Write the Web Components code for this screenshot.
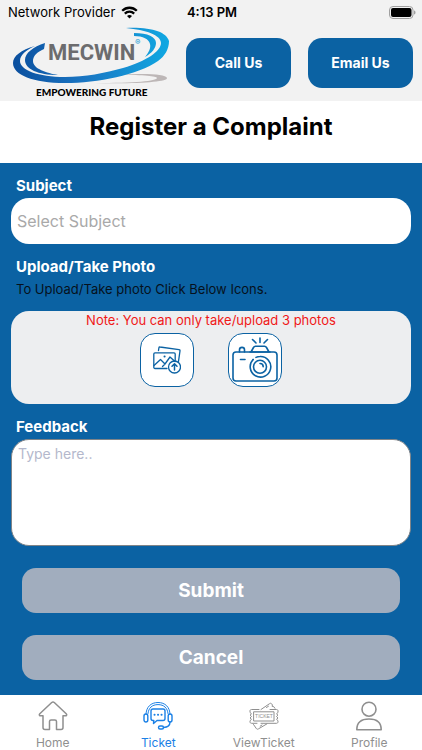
<!DOCTYPE html>
<html lang="en">
<head>
<meta charset="utf-8">
<meta name="viewport" content="width=device-width, initial-scale=1">
<title>Register a Complaint</title>
<style>
  :root {
    --brand: #0b62a3;
    --chrome: #f2f2f2;
    --active: #1a80e6;
    --idle: #8f8f8f;
  }
  body {
    margin: 0;
    font-family: Inter, "Liberation Sans", sans-serif;
    font-size: 15px;
    line-height: 20px;
    color: #000;
  }
</style>
</head>
<body>
<complaint-screen></complaint-screen>

<script>
'use strict'

class Base extends HTMLElement {
  constructor () {
    super()
    this.attachShadow({ mode: 'open' }).innerHTML = `
      <style>
        :host { display: block; box-sizing: border-box; }
        *, *::before, *::after { box-sizing: border-box; }
        svg { display: block; }
        button, select, textarea { font: inherit; margin: 0; }
      </style>
      ${this.render()}
    `
  }

  render () { return '<slot></slot>' }
}

customElements.define('status-bar', class extends Base {
  render () {
    return `
      <style>
        :host {
          display: grid;
          grid-template-columns: 1fr auto 1fr;
          align-items: center;
          height: 24px;
          padding: 0 6px 0 8px;
          font-size: 13px;
        }
        .carrier { display: flex; align-items: center; gap: 6px; white-space: nowrap; }
        .time { font-weight: 600; }
        .battery { justify-self: end; }
      </style>
      <div class="carrier">
        <span>Network Provider</span>
        <svg width="17" height="13" viewBox="0 0 17 13" fill="none" stroke="#000" stroke-width="2.3">
          <path d="M1.2 4.8C5.4 .7 11.6 .7 15.8 4.8M3.8 7.6c2.7-2.6 6.7-2.6 9.4 0"/>
          <path d="M8.5 12.6L6 9.9c1.5-1.3 3.5-1.3 5 0z" fill="#000" stroke="none"/>
        </svg>
      </div>
      <span class="time">4:13 PM</span>
      <svg class="battery" width="27" height="13" viewBox="0 0 27 13">
        <rect x=".5" y=".5" width="23.5" height="12" rx="3.5" fill="none" stroke="#a0a0a0"/>
        <rect x="2" y="2" width="20.5" height="9" rx="2" fill="#000"/>
        <path d="M25 4.5c2 .6 2 3.4 0 4z" fill="#a0a0a0"/>
      </svg>
    `
  }
})

customElements.define('brand-logo', class extends Base {
  render () {
    return `
      <svg width="156" height="72" viewBox="0 0 156 72" role="img" aria-label="Mecwin">
        <defs>
          <linearGradient id="swoosh" gradientUnits="userSpaceOnUse" x1="0" y1="0" x2="156" y2="0">
            <stop offset="0" stop-color="#0b4f9e"/>
            <stop offset=".45" stop-color="#1a75c2"/>
            <stop offset="1" stop-color="#10a8e2"/>
          </linearGradient>
        </defs>
        <path d="M108 48c22-2 45-1 46 3 1 4-30 6-72 5 40 0 62-2 62-5 0-2-14-3-36-3z" fill="#bdb7b7"/>
        <g fill="url(#swoosh)">
          <path d="M22 19C8 23 0 29 0 36c0 12 20 20 52 20 33 0 73-8 93-22 7-5 11-12 11-20C153 5 139 0 113 1c20 2 35 7 35 15 0 8-14 18-38 25-18 5-38 9-58 9C25 50 7 43 7 34c0-6 6-11 15-15z"/>
          <path d="M32 16C20 20 12 26 12 33c0 9 13 15 33 15-11-2-25-6-25-14 0-5 4-9 11-12z"/>
          <path d="M121 6c14 0 22 4 22 10 0 5-4 10-11 14 4-5 6-9 5-13-1-5-7-8-16-8z"/>
        </g>
        <text x="35" y="33" font-family="Roboto, sans-serif" font-size="22" font-weight="700" fill="#6c6c6e">MECWIN</text>
        <text x="122" y="18" font-size="8" fill="#1699d3">®</text>
        <text x="23" y="69" font-family="Lato, sans-serif" font-size="10" font-weight="900">EMPOWERING FUTURE</text>
      </svg>
    `
  }
})

customElements.define('contact-button', class extends Base {
  render () {
    return `
      <style>
        button {
          width: 100%;
          height: 50px;
          padding: 0;
          border: 0;
          border-radius: 14px;
          background: var(--brand);
          color: #fff;
          font-size: 14px;
          font-weight: 700;
        }
      </style>
      <button type="button"><slot></slot></button>
    `
  }
})

customElements.define('app-header', class extends Base {
  render () {
    return `
      <style>
        :host { background: var(--chrome); }
        .row {
          display: flex;
          align-items: center;
          gap: 17px;
          height: 77px;
          padding: 0 9px 0 13px;
        }
        contact-button { flex: 1; }
      </style>
      <status-bar></status-bar>
      <div class="row">
        <brand-logo></brand-logo>
        <contact-button>Call Us</contact-button>
        <contact-button>Email Us</contact-button>
      </div>
    `
  }
})

customElements.define('subject-field', class extends Base {
  render () {
    return `
      <style>
        label { display: block; padding: 0 5px; margin-bottom: 2px; color: #fff; font-weight: 700; }
        select {
          appearance: none;
          display: block;
          width: 100%;
          height: 46px;
          padding: 0 6px;
          border: 0;
          border-radius: 18px;
          background: #fff;
          color: #a9a9a9;
          font-size: 16px;
        }
      </style>
      <label for="subject">Subject</label>
      <select id="subject"><option>Select Subject</option></select>
    `
  }
})

customElements.define('feedback-field', class extends Base {
  render () {
    return `
      <style>
        label { display: block; padding: 0 5px; margin-bottom: 2px; color: #fff; font-weight: 700; }
        textarea {
          display: block;
          width: 100%;
          height: 107px;
          padding: 4px 6px;
          border: 1px solid #808488;
          border-radius: 18px;
          background: #fff;
          font-size: 14px;
          resize: none;
        }
        textarea::placeholder { color: #b4b8cc; opacity: 1; }
      </style>
      <label for="feedback">Feedback</label>
      <textarea id="feedback" placeholder="Type here.."></textarea>
    `
  }
})

customElements.define('photo-picker', class extends Base {
  render () {
    return `
      <style>
        h2 { margin: 0 5px 2px; color: #fff; font-size: 15px; line-height: 20px; font-weight: 700; }
        .hint { margin: 0 5px 12px; font-size: 13px; color: #06111c; }
        .panel {
          height: 93px;
          border-radius: 18px;
          background: #edeef0;
          text-align: center;
        }
        .note { margin: 0; color: #f01818; font-size: 13px; line-height: 18px; }
        .tiles { display: flex; justify-content: center; gap: 34px; padding-top: 4px; }
        button {
          display: grid;
          place-items: center;
          width: 54px;
          height: 54px;
          padding: 0;
          border: 1px solid var(--brand);
          border-radius: 15px;
          background: #fff;
        }
        svg { fill: none; stroke: var(--brand); stroke-linecap: round; stroke-linejoin: round; }
      </style>
      <h2>Upload/Take Photo</h2>
      <p class="hint">To Upload/Take photo Click Below Icons.</p>
      <div class="panel">
        <p class="note">Note: You can only take/upload 3 photos</p>
        <div class="tiles">
          <button type="button" aria-label="Upload photo">
            <svg width="28" height="28" viewBox="0 0 28 28" stroke-width="1.3">
              <path d="M5.5 4.5l.4-2.7c.1-.6.5-.9 1.1-.8L26 3.6c.8.1 1.1.6 1 1.2l-1.5 10.5M14 22.500H2c-.8 0-1.200-.5-1.200-1.200V8c0-.7.5-1.200 1.200-1.200h19c.7 0 1.200.5 1.200 1.200v6.500"/>
              <path d="M1 19.500l6.500-6 4.500 4.500 5-7 5 4.500M9.500 20.500l2.500-2.500"/>
              <path d="M11.500 10.500h.1" stroke-width="2"/>
              <circle cx="21.500" cy="21" r="6"/>
              <path d="M21.500 24v-6M19 20.200l2.500-2.500 2.500 2.500" stroke-width="1.500"/>
            </svg>
          </button>
          <button type="button" aria-label="Take photo">
            <svg width="46" height="46" viewBox="0 0 46 46" stroke-width="1.6">
              <rect x="1" y="15" width="44" height="29" rx="3"/>
              <path d="M7.500 15v-2.200c0-3.200 5-3.200 5 0V15M19 15l2.500-4.500c.5-.9 1-1.200 2-1.200h9c1 0 1.500.3 2 1.200L37 15M18 15h20"/>
              <path d="M28 1v4.500M20.500 2.500l3.500 3.500M35.500 2.500L32 6"/>
              <path d="M8.500 22.500h4.500M21 22.500h.1"/>
              <path d="M21.200 22.500A10.300 10.300 0 1 0 28 19.500c-1.700 0-2.800.3-4 .9"/>
              <circle cx="28" cy="29.800" r="6.500"/>
              <path d="M28 26.500c2 0 3.200 1.300 3.200 3.200"/>
            </svg>
          </button>
        </div>
      </div>
    `
  }
})

customElements.define('action-button', class extends Base {
  render () {
    return `
      <style>
        button {
          display: block;
          width: 100%;
          height: 45px;
          padding: 0;
          border: 0;
          border-radius: 14px;
          background: #a1adbe;
          color: #fff;
          font-size: 19px;
          font-weight: 700;
        }
      </style>
      <button type="button"><slot></slot></button>
    `
  }
})

customElements.define('tab-item', class extends Base {
  render () {
    return `
      <style>
        :host { flex: 1; color: var(--idle); }
        :host([active]) { color: var(--active); }
        a {
          display: flex;
          flex-direction: column;
          align-items: center;
          gap: 4px;
          color: inherit;
          font-size: 12px;
          line-height: 16px;
          text-decoration: none;
        }
        ::slotted(svg) {
          display: block;
          width: 30px;
          height: 30px;
          fill: none;
          stroke: currentColor;
          stroke-linecap: round;
          stroke-linejoin: round;
        }
      </style>
      <a href="#"><slot name="icon"></slot><slot></slot></a>
    `
  }
})

customElements.define('tab-bar', class extends Base {
  render () {
    return `
      <style>
        :host { display: flex; height: 55px; padding-top: 6px; background: #fff; }
      </style>
      <tab-item>
        <svg slot="icon" viewBox="0 0 30 30" stroke-width="1.5">
          <path d="M5 14.800v11.700c0 1.200.8 2 2 2h4.500V20.500c0-1 .6-1.600 1.600-1.600h3.800c1 0 1.600.6 1.600 1.600v8H23c1.200 0 2-.8 2-2V14.800h2.200c1.500 0 1.900-1.200 1-2.100L16.300 1.500c-.8-.7-1.800-.7-2.600 0L1.800 12.700c-.9.9-.5 2.100 1 2.100z"/>
        </svg>
        Home
      </tab-item>
      <tab-item active>
        <svg slot="icon" viewBox="0 0 30 30" stroke-width="1.4">
          <path d="M3 13.500C3 6 8 1.500 15 1.500S27 6 27 13.500M5 12.500C5.500 7 9 3.600 15 3.600S24.500 7 25 12.500" stroke-width="1"/>
          <rect x="1" y="13" width="3.800" height="8" rx="1.900"/>
          <rect x="25.200" y="13" width="3.800" height="8" rx="1.900"/>
          <path d="M27 21c0 3.500-2 5.200-6.500 5.500"/>
          <rect x="15.500" y="25" width="5" height="3" rx="1.500"/>
          <path d="M10 8h10c1.200 0 2 .8 2 2v7.500c0 1.200-.8 2-2 2h-6L10.500 22.500l.3-3H10c-1.200 0-2-.8-2-2V10c0-1.200.8-2 2-2z"/>
          <path d="M11.500 13.700h.1M15 13.700h.1M18.500 13.700h.1" stroke-width="2"/>
        </svg>
        Ticket
      </tab-item>
      <tab-item>
        <svg slot="icon" viewBox="0 0 30 30" stroke-width="1">
          <path d="M10 8.500H2.500c-.9 0-1.500.5-1.500 1.400v1.600l1.500 1.300L1 14.200l1.500 1.300L1 17l1.500 1.300L1 19.700v1.100c0 .9.600 1.500 1.500 1.500H8M21 8.500h6.500c.9 0 1.500.5 1.500 1.400v1.600l-1.500 1.300 1.500 1.400-1.500 1.300L29 17l-1.500 1.300 1.500 1.400v1.100c0 .9-.6 1.500-1.500 1.500H12"/>
          <path d="M12 8.500L20.500 2.700c.8-.6 1.500-.6 2 0l.9 1.200-.2 1.500 1.500.2 1.200 1.700M17.500 6.500l2-1.300M4.500 23.500l2.800 4c.5.800 1.300.9 2.100.4l8.500-5M13 24l-1.800 1.200"/>
          <path d="M5 10.800h20v9.200H5z"/>
          <text x="15" y="17.400" text-anchor="middle" font-family="Liberation Sans, sans-serif" font-size="5" fill="currentColor" stroke="none">TICKET</text>
        </svg>
        ViewTicket
      </tab-item>
      <tab-item>
        <svg slot="icon" viewBox="0 0 30 30" stroke-width="1.6">
          <circle cx="15" cy="8.200" r="7"/>
          <path d="M2.800 28.700C2.800 21.500 7 18 15 18s12.200 3.500 12.200 10.700z"/>
        </svg>
        Profile
      </tab-item>
    `
  }
})

customElements.define('complaint-screen', class extends Base {
  render () {
    return `
      <style>
        :host { display: flex; flex-direction: column; min-height: 100vh; }
        h1 {
          margin: 0;
          padding: 10px 0 20px;
          background: #fff;
          font-size: 24px;
          line-height: 32px;
          font-weight: 700;
          text-align: center;
        }
        form {
          flex: 1;
          display: flex;
          flex-direction: column;
          gap: 13px;
          padding: 13px 11px 15px;
          background: var(--brand);
        }
        .actions {
          display: flex;
          flex-direction: column;
          gap: 22px;
          padding: 9px 11px 0;
        }
      </style>
      <app-header></app-header>
      <h1>Register a Complaint</h1>
      <form>
        <subject-field></subject-field>
        <photo-picker></photo-picker>
        <feedback-field></feedback-field>
        <div class="actions">
          <action-button>Submit</action-button>
          <action-button>Cancel</action-button>
        </div>
      </form>
      <tab-bar></tab-bar>
    `
  }
})
</script>
</body>
</html>
